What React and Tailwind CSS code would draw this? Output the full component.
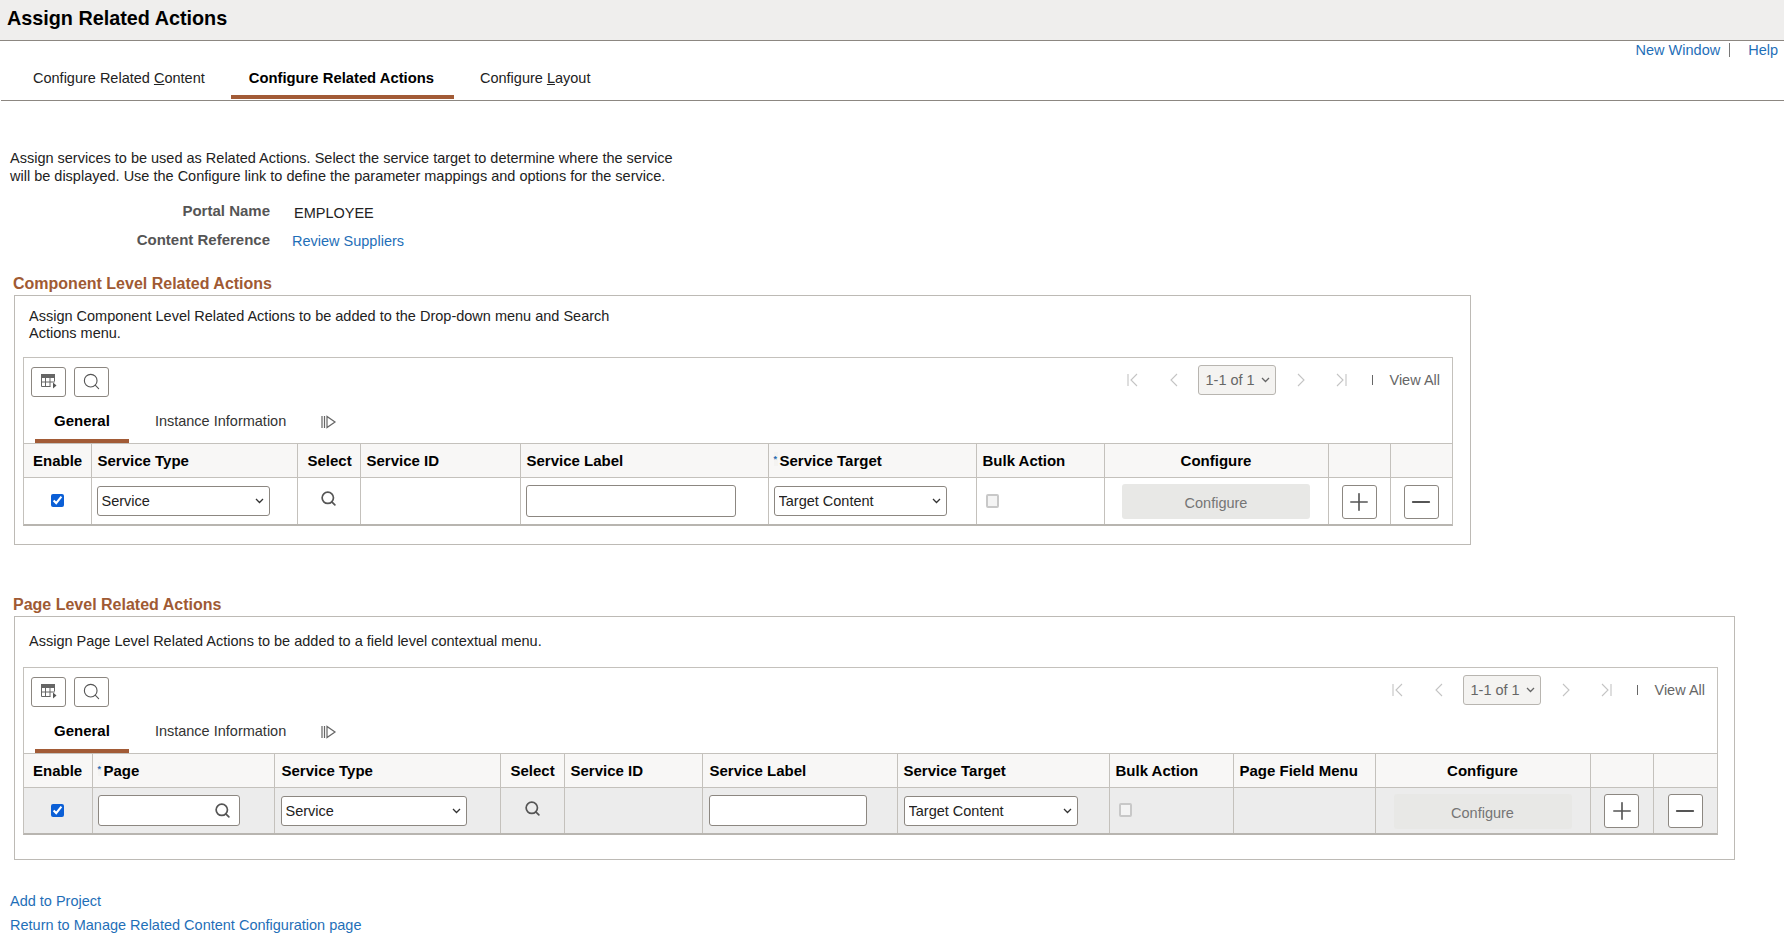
import { Plus, Minus, Search } from 'lucide-react';

const th = 'border-t border-b border-l first:border-l-0 border-[#c4c1bc] bg-[#f8f7f6] px-[6px] text-left text-[15px] font-bold text-black';
const td = 'border-l first:border-l-0 border-[#c4c1bc] p-0 align-middle';
const control = 'block h-[30px] rounded-[3px] border border-[#8c8781] bg-white pl-[4px] text-[14.5px] text-[#222]';

function GridIcon() {
  return (
    <svg width="18" height="18" viewBox="0 0 18 18" fill="none" stroke="#666" strokeWidth="1">
      <rect x="1.5" y="1.5" width="13" height="3" fill="#666" />
      <path d="M1.5 4.5v9h9M14.5 4.5v4M1.5 9h13M5.5 4.5v9M10 4.5v9" />
      <path d="M13 9.5l3.5 3-3.5 3z" fill="#555" stroke="none" />
    </svg>
  );
}

function MoreIcon() {
  return (
    <svg width="16" height="14" viewBox="0 0 16 14" fill="none" stroke="#666" strokeWidth="1.2">
      <path d="M1 1v12M3.5 1v12M6 1.5v11l8-5.5z" />
    </svg>
  );
}

function Chevron({ color = '#333' }) {
  return (
    <svg className="pointer-events-none absolute right-[6px] top-1/2 -translate-y-1/2" width="9" height="6" viewBox="0 0 9 6" fill="none" stroke={color} strokeWidth="1.3">
      <path d="M1 1l3.5 3.5L8 1" />
    </svg>
  );
}

function Dropdown({ label, className }) {
  return (
    <div className={`relative ${className}`}>
      <select className={`${control} w-full appearance-none`}><option>{label}</option></select>
      <Chevron />
    </div>
  );
}

function Pager() {
  return (
    <div className="-mt-[2px] flex h-[30px] items-center text-[14.5px] text-[#666]">
      <svg width="11" height="14" viewBox="0 0 11 14" fill="none" stroke="#c4c4c4" strokeWidth="1.1"><path d="M1 1v12M10 1L4 7l6 6" /></svg>
      <svg className="ml-[31px]" width="9" height="14" viewBox="0 0 9 14" fill="none" stroke="#c4c4c4" strokeWidth="1.1"><path d="M8 1L2 7l6 6" /></svg>
      <div className="relative ml-[20px] w-[78px]">
        <select disabled className="h-[30px] w-full appearance-none rounded-[3px] border border-[#b8b5b0] bg-[#f4f3f1] pl-[6px] text-[14.5px] text-[#666] opacity-100">
          <option>1-1 of 1</option>
        </select>
        <Chevron color="#666" />
      </div>
      <svg className="ml-[21px]" width="9" height="14" viewBox="0 0 9 14" fill="none" stroke="#c4c4c4" strokeWidth="1.1"><path d="M1 1l6 6-6 6" /></svg>
      <svg className="ml-[30px]" width="11" height="14" viewBox="0 0 11 14" fill="none" stroke="#c4c4c4" strokeWidth="1.1"><path d="M1 1l6 6-6 6M10 1v12" /></svg>
      <span className="ml-[25px] h-[10px] w-px bg-[#666]" />
      <span className="ml-[16px]">View All</span>
    </div>
  );
}

function GridTop() {
  return (
    <>
      <div className="flex justify-between pl-[7px] pr-[12px] pt-[9px]">
        <div className="flex gap-[8px]">
          <button className="flex h-[30px] w-[35px] items-center justify-center rounded-[3px] border border-[#8c8781] bg-white"><GridIcon /></button>
          <button className="flex h-[30px] w-[35px] items-center justify-center rounded-[3px] border border-[#8c8781] bg-white pb-[2px]"><Search size={19} strokeWidth={1.4} color="#555" /></button>
        </div>
        <Pager />
      </div>
      <div className="ml-[11px] mt-[15px] flex items-start text-[14.5px] leading-[18px]">
        <div className="border-b-[4px] border-[#a25b36] px-[19px] pb-[9px] text-[15px] font-bold text-black">General</div>
        <div className="ml-[7px] px-[19px] text-[#333]">Instance Information</div>
        <div className="ml-[16px] mt-[3px]"><MoreIcon /></div>
      </div>
    </>
  );
}

function Required() {
  return <span className="mr-[2px] inline-block h-[14px] w-[4px] bg-[#f4f3f1] align-top text-[9px] leading-[14px] text-[#2b6cb0]">*</span>;
}

function AddRemove() {
  return (
    <>
      <td className={td}>
        <button className="mx-auto mt-[2px] flex h-[34px] w-[35px] items-center justify-center rounded-[3px] border border-[#8c8781] bg-white"><Plus size={28} strokeWidth={1.4} color="#555" /></button>
      </td>
      <td className={td}>
        <button className="mx-auto mt-[2px] flex h-[34px] w-[35px] items-center justify-center rounded-[3px] border border-[#8c8781] bg-white"><Minus size={28} strokeWidth={1.6} color="#555" /></button>
      </td>
    </>
  );
}

function ConfigureButton({ width }) {
  return (
    <button disabled className={`mx-auto mt-[2px] block h-[35px] ${width} rounded-[3px] bg-[#e8e8e6] pt-[3px] text-[14.5px] text-[#757575]`}>Configure</button>
  );
}

function EnableBox() {
  return <input type="checkbox" checked readOnly className="mx-auto block h-[13px] w-[13px] accent-[#0b5fd6]" />;
}

function BulkBox() {
  return <input type="checkbox" disabled className="ml-[9px] block h-[14px] w-[13px] appearance-none rounded-[2px] border-2 border-[#c8c8c8] bg-[#f4f4f4]" />;
}

function ComponentGrid() {
  return (
    <div className="ml-[8px] w-[1430px] border-x border-t border-b-[2px] border-x-[#c4c1bc] border-t-[#c4c1bc] border-b-[#b8b5b0]">
      <GridTop />
      <table className="w-full table-fixed border-collapse">
        <colgroup>
          <col className="w-[67px]" /><col className="w-[206px]" /><col className="w-[63px]" /><col className="w-[160px]" /><col className="w-[248px]" />
          <col className="w-[208px]" /><col className="w-[128px]" /><col className="w-[224px]" /><col className="w-[62px]" /><col className="w-[62px]" />
        </colgroup>
        <thead>
          <tr className="h-[34px]">
            <th className={`${th} !pl-[9px]`}>Enable</th>
            <th className={th}>Service Type</th>
            <th className={`${th} !pl-[10px]`}>Select</th>
            <th className={th}>Service ID</th>
            <th className={th}>Service Label</th>
            <th className={`${th} !pl-[5px]`}><Required />Service Target</th>
            <th className={th}>Bulk Action</th>
            <th className={`${th} !text-center`}>Configure</th>
            <th className={th}></th>
            <th className={th}></th>
          </tr>
        </thead>
        <tbody>
          <tr className="h-[46px]">
            <td className={td}><EnableBox /></td>
            <td className={td}><Dropdown label="Service" className="ml-[5px] w-[173px]" /></td>
            <td className={td}><Search size={17} strokeWidth={2.4} color="#555" className="mx-auto mb-[4px]" /></td>
            <td className={td}></td>
            <td className={td}><input className={`${control} ml-[5px] !h-[32px] w-[210px]`} /></td>
            <td className={td}><Dropdown label="Target Content" className="ml-[5px] w-[173px]" /></td>
            <td className={td}><BulkBox /></td>
            <td className={td}><ConfigureButton width="w-[188px]" /></td>
            <AddRemove />
          </tr>
        </tbody>
      </table>
    </div>
  );
}

function PageGrid() {
  return (
    <div className="ml-[8px] w-[1695px] border-x border-t border-b-[2px] border-x-[#c4c1bc] border-t-[#c4c1bc] border-b-[#b8b5b0]">
      <GridTop />
      <table className="w-full table-fixed border-collapse">
        <colgroup>
          <col className="w-[68px]" /><col className="w-[182px]" /><col className="w-[226px]" /><col className="w-[64px]" /><col className="w-[138px]" /><col className="w-[195px]" />
          <col className="w-[212px]" /><col className="w-[124px]" /><col className="w-[142px]" /><col className="w-[215px]" /><col className="w-[63px]" /><col className="w-[64px]" />
        </colgroup>
        <thead>
          <tr className="h-[34px]">
            <th className={`${th} !pl-[9px]`}>Enable</th>
            <th className={`${th} !pl-[5px]`}><Required />Page</th>
            <th className={`${th} !pl-[7px]`}>Service Type</th>
            <th className={`${th} !pl-[10px]`}>Select</th>
            <th className={th}>Service ID</th>
            <th className={`${th} !pl-[7px]`}>Service Label</th>
            <th className={th}>Service Target</th>
            <th className={th}>Bulk Action</th>
            <th className={th}>Page Field Menu</th>
            <th className={`${th} !text-center`}>Configure</th>
            <th className={th}></th>
            <th className={th}></th>
          </tr>
        </thead>
        <tbody>
          <tr className="h-[45px] bg-[#ececec]">
            <td className={td}><EnableBox /></td>
            <td className={td}>
              <div className={`${control} ml-[5px] mt-[1px] flex !h-[31px] w-[142px] items-center justify-end pr-[8px]`}>
                <Search size={17} strokeWidth={2.4} color="#555" />
              </div>
            </td>
            <td className={td}><Dropdown label="Service" className="ml-[6px] mt-[1px] w-[186px]" /></td>
            <td className={td}><Search size={17} strokeWidth={2.4} color="#555" className="mx-auto mb-[4px]" /></td>
            <td className={td}></td>
            <td className={td}><input className={`${control} ml-[6px] mt-[1px] !h-[31px] w-[158px]`} /></td>
            <td className={td}><Dropdown label="Target Content" className="ml-[6px] mt-[1px] w-[174px]" /></td>
            <td className={td}><BulkBox /></td>
            <td className={td}></td>
            <td className={td}><ConfigureButton width="w-[178px]" /></td>
            <AddRemove />
          </tr>
        </tbody>
      </table>
    </div>
  );
}

export default function App() {
  return (
    <div className="min-h-[941px] bg-white font-['Liberation_Sans',Arial,sans-serif] text-[14.5px] leading-[18px] text-[#222]">
      <div className="flex h-[41px] items-center border-b border-[#8c8781] bg-[#efeeed] pb-[4px] pl-[7px]">
        <h1 className="text-[19.8px] font-bold text-black">Assign Related Actions</h1>
      </div>

      <div className="ml-px flex h-[60px] items-start justify-between border-b border-[#8c8781]">
        <div className="mt-[28px] flex gap-[8px] pl-[14px]">
          <div className="border-b-[4px] border-transparent px-[18px] pb-[8px]">Configure Related <u>C</u>ontent</div>
          <div className="border-b-[4px] border-[#a25b36] pb-[8px] pl-[18px] pr-[20px] text-[14.8px] font-bold text-black">Configure Related Actions</div>
          <div className="border-b-[4px] border-transparent px-[18px] pb-[8px]">Configure <u>L</u>ayout</div>
        </div>
        <div className="mr-[6px] flex items-center text-[#1f6fb8]">
          <a>New Window</a>
          <span className="ml-[9px] h-[14px] w-px bg-[#777]" />
          <a className="ml-[18px]">Help</a>
        </div>
      </div>

      <p className="ml-[10px] mt-[48px] w-[680px]">
        Assign services to be used as Related Actions. Select the service target to determine where the service will be displayed. Use the Configure link to define the parameter mappings and options for the service.
      </p>

      <div className="mt-[17px] flex">
        <div className="w-[270px] text-right text-[15px] font-bold text-[#555]">Portal Name</div>
        <div className="ml-[24px] mt-[2px]">EMPLOYEE</div>
      </div>
      <div className="mt-[9px] flex">
        <div className="w-[270px] text-right text-[15px] font-bold text-[#555]">Content Reference</div>
        <a className="ml-[22px] mt-[1px] text-[#1f6fb8]">Review Suppliers</a>
      </div>

      <h2 className="ml-[13px] mt-[25px] text-[16px] font-bold text-[#9f5a33]">Component Level Related Actions</h2>
      <div className="ml-[14px] mt-[2px] h-[250px] w-[1457px] border border-[#bdbab5] pt-[12px]">
        <p className="ml-[14px] w-[600px] leading-[17px]">
          Assign Component Level Related Actions to be added to the Drop-down menu and Search Actions menu.
        </p>
        <div className="mt-[15px]"><ComponentGrid /></div>
      </div>

      <h2 className="ml-[13px] mt-[51px] text-[16px] font-bold text-[#9f5a33]">Page Level Related Actions</h2>
      <div className="ml-[14px] mt-[2px] h-[244px] w-[1721px] border border-[#bdbab5] pt-[16px]">
        <p className="ml-[14px] leading-[17px]">Assign Page Level Related Actions to be added to a field level contextual menu.</p>
        <div className="mt-[17px]"><PageGrid /></div>
      </div>

      <div className="ml-[10px] mt-[32px] flex flex-col gap-[6px] text-[#1f6fb8]">
        <a>Add to Project</a>
        <a>Return to Manage Related Content Configuration page</a>
      </div>
    </div>
  );
}
